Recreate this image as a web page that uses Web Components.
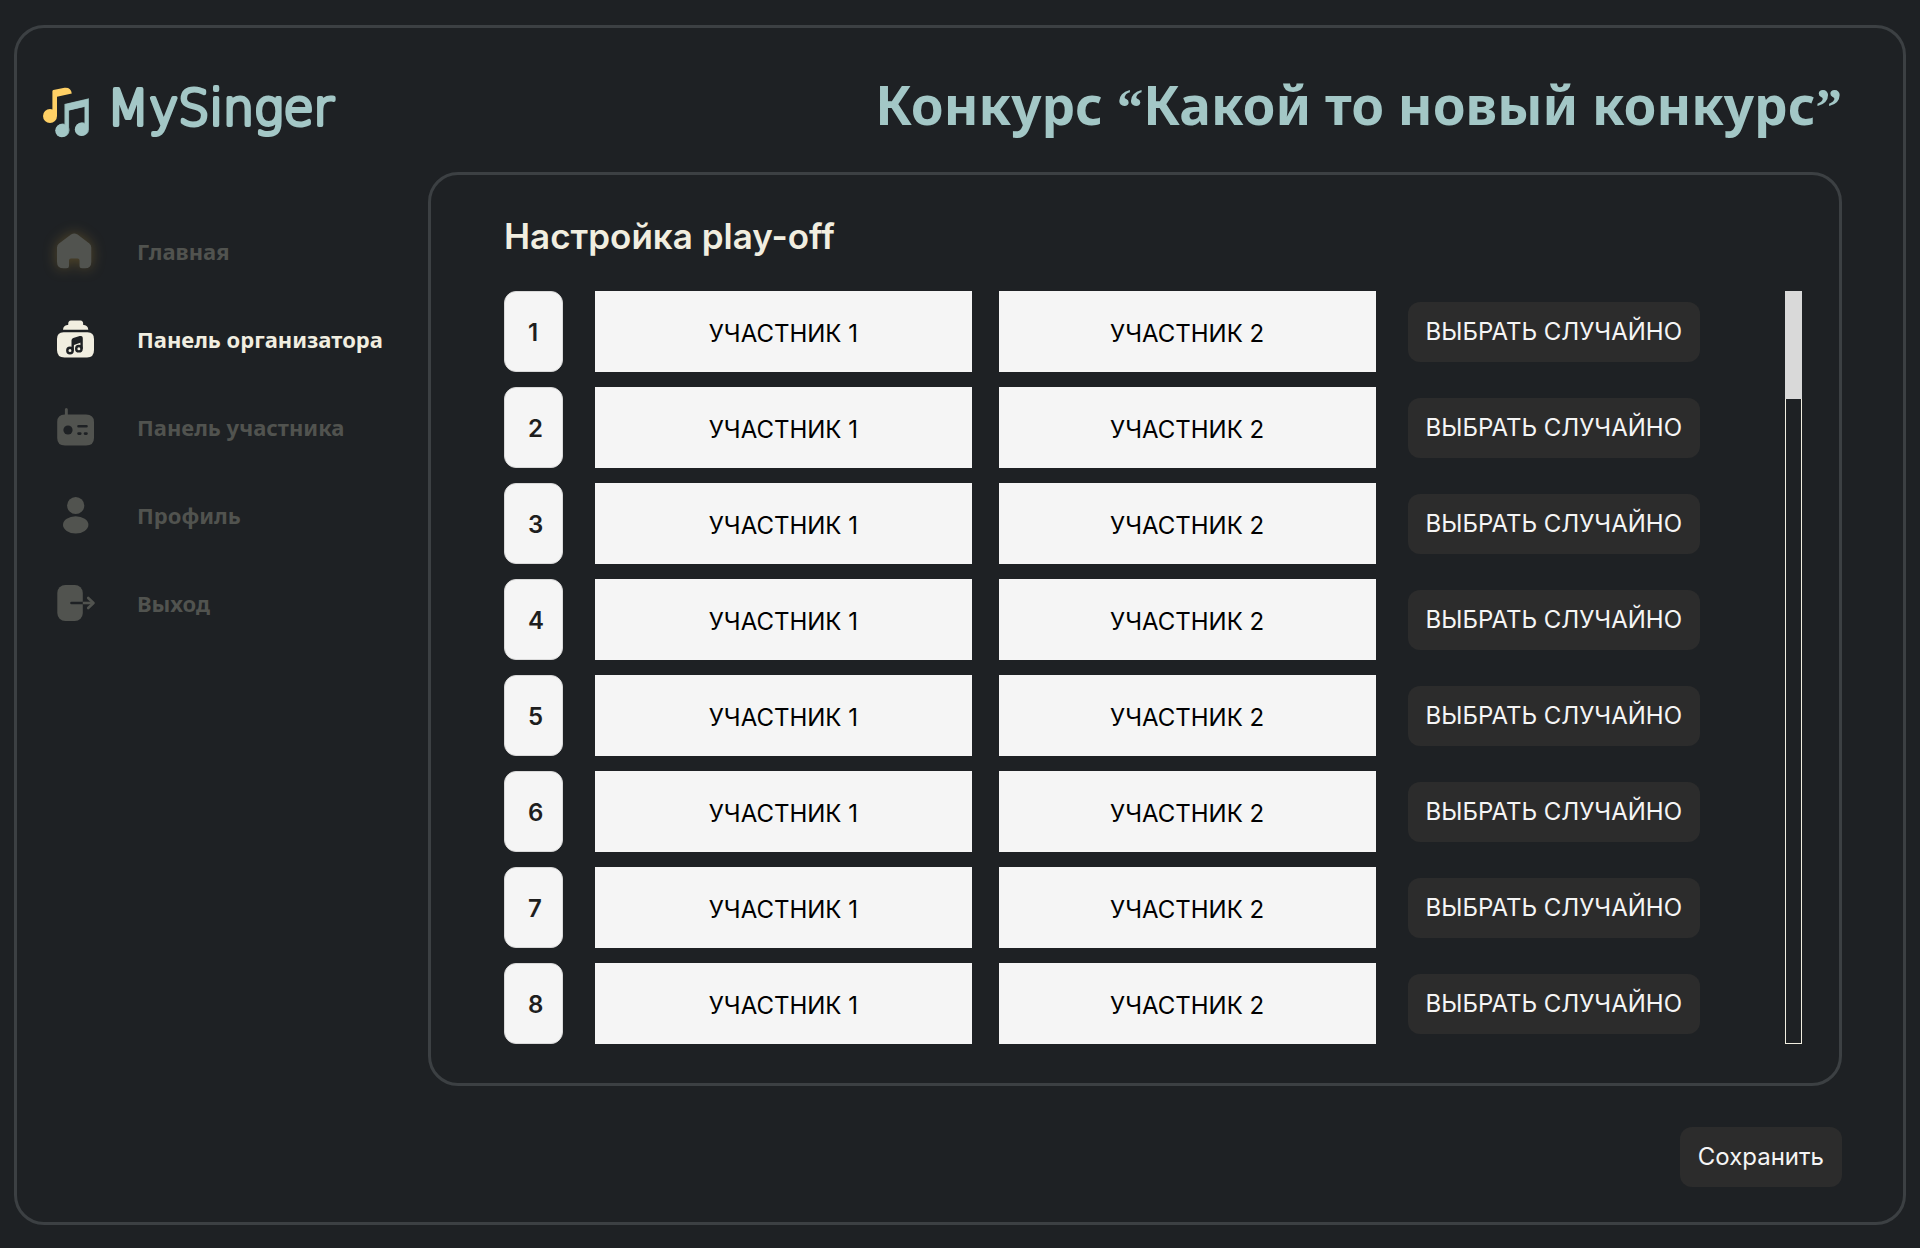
<!DOCTYPE html>
<html lang="ru">
<head>
<meta charset="utf-8">
<title>MySinger — Настройка play-off</title>
<style>
  :root {
    --bg: #1e2124;
    --line: #3c4043;
    --teal: #a3c7c6;
    --cream: #f1eee0;
    --dim: #51534f;
    --button: #2c2c2c;
    --cell: #f5f5f5;
    --ui: Inter, "Liberation Sans", sans-serif;
    --brand: "Noto Sans", "Open Sans", sans-serif;
  }
  body { margin: 0; background: var(--bg); font-family: var(--ui); }
</style>
</head>
<body>
<singer-app></singer-app>

<template id="t-app">
  <style>
    :host { display: flex; box-sizing: border-box; min-height: 100vh; padding: 25px 14px 23px; }
    .frame {
      flex: 1; box-sizing: border-box; border: 3px solid var(--line); border-radius: 30px;
      padding: 0 61px 35px 0; display: grid;
      grid-template: 144px 1fr / 411px minmax(0, 1fr);
    }
    header { grid-column: 1 / -1; display: flex; align-items: center; justify-content: space-between; padding: 12px 0 0 25px; }
    singer-logo { margin-top: 12px; }
    h1 { margin: 0; font: 700 53px/72px var(--brand); color: var(--teal); }
    .q { font-family: "Liberation Serif", serif; }
    main { display: flex; flex-direction: column; }
    footer { display: flex; justify-content: flex-end; margin-top: 41px; }
  </style>
  <div class="frame">
    <header>
      <singer-logo></singer-logo>
      <h1>Конкурс <span class="q">“</span>Какой то новый конкурс<span class="q">”</span></h1>
    </header>
    <side-nav></side-nav>
    <main>
      <playoff-panel></playoff-panel>
      <footer><action-button>Сохранить</action-button></footer>
    </main>
  </div>
</template>

<template id="t-logo">
  <style>
    :host { display: block; }
    a { display: flex; align-items: center; gap: 17px; text-decoration: none; }
    svg { display: block; overflow: visible; }
    text {
      font: 200 49px "DejaVu Sans", sans-serif; fill: var(--teal); stroke: var(--teal);
      stroke-width: 4px; stroke-linejoin: round; stroke-linecap: round;
    }
  </style>
  <a href="#">
    <svg width="48" height="52" viewBox="0 0 48 52" aria-hidden="true">
      <g fill="#ffd065">
        <circle cx="8" cy="30" r="7"/>
        <path d="M10.4 30V5.2Q10.4 4.3 11.3 4L22.5 1.7Q29 1 29.8 7.6L15 10.8V30Z"/>
      </g>
      <g fill="#86a9a8">
        <circle cx="20.7" cy="44.3" r="6.8"/>
        <circle cx="40.3" cy="43" r="6.8"/>
        <path d="M22.4 44V18L47 12.2V43H42.4V21L27.1 24.6V44Z"/>
      </g>
      <g fill="#a3c7c6">
        <circle cx="19.8" cy="44.6" r="6.6"/>
        <circle cx="39.4" cy="43.4" r="6.6"/>
        <path d="M23.2 44V18.2L46 13V43H43V20.6L26.4 24.4V44Z"/>
      </g>
    </svg>
    <svg width="236" height="72" role="img"><text x="0" y="49">MySinger</text></svg>
  </a>
</template>

<template id="t-nav">
  <style>
    :host { display: block; }
    nav { display: flex; flex-direction: column; gap: 44px; padding: 57px 0 0 37px; }
  </style>
  <nav>
    <nav-item icon="home">Главная</nav-item>
    <nav-item icon="library" active>Панель организатора</nav-item>
    <nav-item icon="radio">Панель участника</nav-item>
    <nav-item icon="user">Профиль</nav-item>
    <nav-item icon="exit">Выход</nav-item>
  </nav>
</template>

<template id="t-nav-item">
  <style>
    :host { display: block; color: var(--dim); }
    :host([active]) { color: var(--cream); }
    a { display: flex; align-items: center; gap: 39px; height: 44px; color: inherit; text-decoration: none; font: 700 22px/30px var(--brand); }
    svg { flex: none; display: block; overflow: visible; }
    :host([icon="home"]) svg { filter: drop-shadow(0 0 7px rgba(255, 196, 60, .25)); }
  </style>
  <a href="#"><svg width="44" height="44" viewBox="0 0 44 44" fill="currentColor" aria-hidden="true"></svg><slot></slot></a>
</template>

<template id="t-panel">
  <style>
    :host { display: block; box-sizing: border-box; border: 3px solid var(--line); border-radius: 30px; padding: 39px 37px 39px 73px; }
    h2 { margin: 0 0 33px; font: 600 35px/44px var(--ui); color: var(--cream); }
    .body { display: flex; gap: 85px; }
    .rows { flex: 1; display: flex; flex-direction: column; gap: 15px; }
    .track { box-sizing: border-box; width: 17px; border: 1px solid var(--cream); display: flex; }
    .thumb { flex: 1; height: 108px; margin: -1px; background: #d9d9d9; }
  </style>
  <h2>Настройка play-off</h2>
  <div class="body">
    <div class="rows"></div>
    <div class="track"><div class="thumb"></div></div>
  </div>
</template>

<template id="t-row">
  <style>
    :host { display: flex; align-items: center; gap: 32px; }
    .num {
      box-sizing: border-box; width: 59px; height: 81px; padding-left: 23px; border: 1px solid #d9d9d9; border-radius: 12px;
      background: var(--cell); color: #1e1e1e; font: 600 24px/81px var(--ui);
    }
    .pair { flex: 1; display: flex; gap: 27px; }
    .cell {
      flex: 1; height: 81px; margin: 0; padding: 4px 0 0; border: 0; border-radius: 0;
      background: var(--cell); color: #000; font: 400 24px/30px var(--ui);
    }
  </style>
  <div class="num"></div>
  <div class="pair">
    <button class="cell" type="button">УЧАСТНИК 1</button>
    <button class="cell" type="button">УЧАСТНИК 2</button>
  </div>
  <action-button>ВЫБРАТЬ СЛУЧАЙНО</action-button>
</template>

<template id="t-button">
  <style>
    :host { display: block; }
    button {
      display: block; height: 60px; padding: 0 18px; border: 0; border-radius: 12px;
      background: var(--button); color: var(--cell); font: 400 24px/30px var(--ui); white-space: nowrap;
    }
  </style>
  <button type="button"><slot></slot></button>
</template>

<script>
  const ICONS = {
    home: `<path transform="translate(0 2)" d="M3 16.5Q3 14 5 12.4L17 3.6Q20.3 1.6 23.6 3.6L35.4 12.4Q37.3 14 37.3 16.5V31Q37.3 37.3 31 37.3H28Q25.5 37.3 25.5 34.8V29.5Q25.5 27.5 23.5 27.5H17Q15 27.5 15 29.5V34.8Q15 37.3 12.5 37.3H9.5Q3 37.3 3 31Z"/>`,
    library: `<path d="M14.2 7.2Q14.2 3.5 17 3.5H26.5Q29.2 3.5 29.2 7.2V8H30Q34 8.5 34.3 12.7H9Q9.3 8.5 13.3 8H14.2Z"/>
      <path d="M9.5 15.2H33.5Q40 15.2 40 22V33Q40 40.5 33 40.5H10.5Q3 40.5 3 33V22Q3 15.2 9.5 15.2Z"/>
      <g fill="none" stroke="#1e2124" stroke-width="2.4">
        <circle cx="16" cy="33.5" r="2.7"/><circle cx="24.9" cy="31.7" r="2.7"/>
        <path d="M18.7 33.5V23.6Q18.7 22.5 19.7 22.1L26 20.2Q27.6 19.8 27.6 21.4V31.7"/>
      </g><path fill="#1e2124" d="M18.7 22.8L27.6 20V25.3L18.7 28.4Z"/>`,
    radio: `<path d="M12.3 3Q13.8 3 13.8 4.5V9.5H32Q40 9.5 40 17V33Q40 40.5 32 40.5H11Q3.2 40.5 3.2 33V17Q3.2 9.5 10.9 9.5V4.5Q10.9 3 12.3 3Z"/>
      <circle cx="14" cy="25" r="4.6" fill="#1e2124"/>
      <path stroke="#1e2124" stroke-width="2.6" stroke-linecap="round" d="M24.5 21.2H32.5M24.5 28.6H26.3M31 28.6H32.5"/>`,
    user: `<circle cx="21.7" cy="12.5" r="8.6"/><ellipse cx="21.7" cy="31.8" rx="12.7" ry="8.6"/>`,
    exit: `<rect x="3.3" y="4" width="25.5" height="36" rx="8"/>
      <g fill="none" stroke-linecap="round" stroke-linejoin="round" stroke-width="2.6">
        <path stroke="#1e2124" d="M17.5 22H28.8"/><path stroke="currentColor" stroke-linecap="butt" d="M28.8 22H38"/>
        <path stroke="currentColor" d="M34.2 17L39.5 22L34.2 27"/></g>`
  };

  class Base extends HTMLElement {
    constructor() {
      super();
      this.attachShadow({ mode: "open" })
        .append(document.getElementById(this.constructor.tpl).content.cloneNode(true));
    }
  }
  customElements.define("action-button", class extends Base { static tpl = "t-button"; });
  customElements.define("singer-logo", class extends Base { static tpl = "t-logo"; });
  customElements.define("nav-item", class extends Base {
    static tpl = "t-nav-item";
    connectedCallback() {
      this.shadowRoot.querySelector("svg").innerHTML = ICONS[this.getAttribute("icon")];
    }
  });
  customElements.define("side-nav", class extends Base { static tpl = "t-nav"; });
  customElements.define("match-row", class extends Base {
    static tpl = "t-row";
    connectedCallback() {
      this.shadowRoot.querySelector(".num").textContent = this.getAttribute("number");
    }
  });
  customElements.define("playoff-panel", class extends Base {
    static tpl = "t-panel";
    connectedCallback() {
      const rows = this.shadowRoot.querySelector(".rows");
      for (let i = 1; i <= 8; i++) {
        const row = document.createElement("match-row");
        row.setAttribute("number", i);
        rows.append(row);
      }
    }
  });
  customElements.define("singer-app", class extends Base { static tpl = "t-app"; });
</script>
</body>
</html>
